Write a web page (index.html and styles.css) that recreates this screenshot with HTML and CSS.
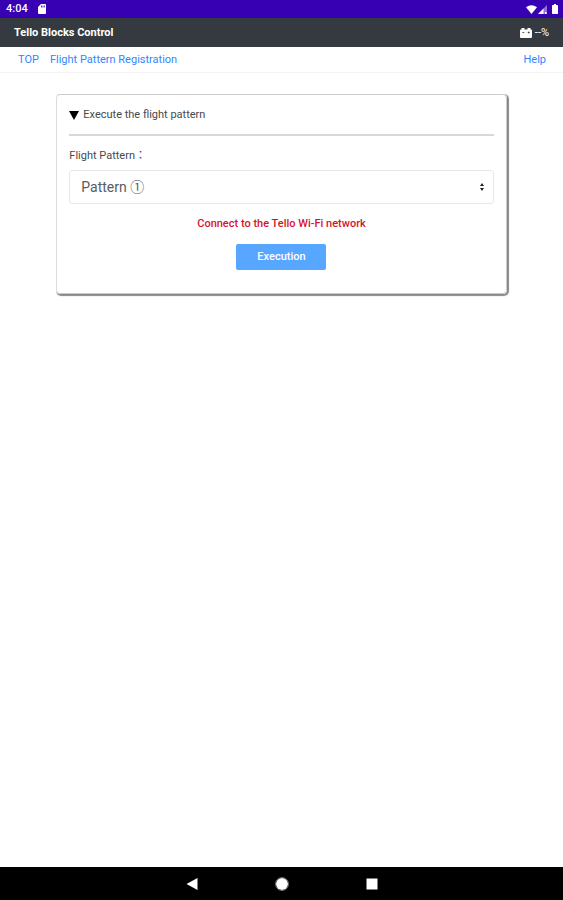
FILE: index.html
```html
<!DOCTYPE html>
<html lang="en">
<head>
<meta charset="utf-8">
<meta name="viewport" content="width=device-width, initial-scale=1">
<title>Tello Blocks Control</title>
<link rel="stylesheet" href="styles.css">
</head>
<body>
<div class="status">
  <div class="status-group">
    <span class="clock">4:04</span>
    <svg width="8" height="10" viewBox="0 0 8 10" fill="currentColor"><path fill-rule="evenodd" d="M3 0h4a1 1 0 0 1 1 1v8a1 1 0 0 1-1 1H1a1 1 0 0 1-1-1V3zM3 1.500v2h.8v-2zM4.600 1.500v2h.8v-2zM6.200 1.500v2h.7v-2z"/></svg>
  </div>
  <div class="status-group status-icons">
    <svg width="11" height="9" viewBox="0 0 11 9" fill="currentColor"><path d="M0 2.300Q5.500-2 11 2.300L5.500 9z"/></svg>
    <svg width="9" height="9" viewBox="0 0 9 9" fill="currentColor"><path opacity=".45" d="M9 0v9H0z"/><path d="M5.500 3.500V9H0zM7 7h1.500v2H7z"/></svg>
    <svg class="charge" width="6" height="10" viewBox="0 0 6 10" fill="currentColor"><path d="M2 0h2v1h1.300q.7 0 .7.700v7.600q0 .7-.7.700H.7Q0 10 0 9.300V1.700Q0 1 .7 1H2z"/></svg>
  </div>
</div>
<header class="header">
  <h1 class="title">Tello Blocks Control</h1>
  <div class="battery">
    <svg width="12" height="10" viewBox="0 0 12 10"><path fill="#fff" d="M1.500 0h3v1.500h3V0h3v1.500h.5q1 0 1 1V9q0 1-1 1H1q-1 0-1-1V2.500q0-1 1-1h.5z"/><path stroke="#343a40" stroke-width=".8" d="M2.300 4.500h2M7.700 4.500h2M8.700 3.500v2"/></svg>
    <span>--%</span>
  </div>
</header>
<nav class="nav">
  <a href="#top">TOP</a>
  <a href="#registration">Flight Pattern Registration</a>
  <a class="help" href="#help">Help</a>
</nav>
<main class="main">
  <form class="card">
    <h2 class="card-title"><svg width="10" height="9" viewBox="0 0 10 9"><path d="M0 0h10L5 9z"/></svg>Execute the flight pattern</h2>
    <label class="label" for="pattern">Flight Pattern：</label>
    <div class="select-wrap">
      <select class="select" id="pattern"><option>Pattern ①</option></select>
      <svg class="arrows" width="4" height="8" viewBox="0 0 4 8"><path fill="#212529" d="M2 0l2 3H0zM2 8L0 5h4z"/></svg>
    </div>
    <p class="warning">Connect to the Tello Wi-Fi network</p>
    <button class="run" type="button">Execution</button>
  </form>
</main>
<footer class="system">
  <button type="button" aria-label="Back"><svg width="12" height="12" viewBox="0 0 12 12" fill="#fff"><path d="M11.500 0v12L.5 6z"/></svg></button>
  <button type="button" aria-label="Home"><svg width="14" height="14" viewBox="0 0 14 14" fill="#fff"><circle cx="7" cy="7" r="6" /><circle cx="7" cy="7" r="6.500" fill="none" stroke="#888" stroke-width=".8"/></svg></button>
  <button type="button" aria-label="Recents"><svg width="12" height="12" viewBox="0 0 12 12" fill="#fff"><path d="M.5.500h11v11H.5z"/></svg></button>
</footer>
</body>
</html>
```
FILE: styles.css
```css
* { box-sizing: border-box; }

body {
  margin: 0;
  min-height: 100vh;
  display: flex;
  flex-direction: column;
  background: #fff;
  color: #454a4f;
  font: 11px/16px Roboto, "Noto Sans CJK JP", sans-serif;
}

svg { display: block; flex: none; }

.status {
  height: 18px;
  padding: 0 5px 0 6px;
  display: flex;
  align-items: center;
  justify-content: space-between;
  background: #3700b3;
  color: #fff;
}
.status-group { display: flex; align-items: center; gap: 10px; }
.status-icons { gap: 1px; }
.charge { margin-left: 4px; }
.clock { font-weight: 500; }

.header {
  height: 29px;
  padding: 0 14px;
  display: flex;
  align-items: center;
  justify-content: space-between;
  background: #343a40;
  color: #fff;
}
.title { margin: 0; font-size: 11px; font-weight: 700; }
.battery { display: flex; align-items: center; gap: 3px; }

.nav {
  height: 26px;
  padding: 1px 17px 0 18px;
  display: flex;
  align-items: center;
  gap: 11px;
  border-bottom: 1px solid #f3f3f3;
}
.nav a { color: #3385ff; text-decoration: none; }
.nav .help { margin-left: auto; }

.main { flex: 1; padding-top: 21px; }

.card {
  width: 80%;
  margin: 0 auto;
  padding: 12px 12px 23px;
  border: 1px solid #ccc;
  border-radius: 4px;
  box-shadow: 1px 1px 1px 1px #888;
  clip-path: inset(0 -3px -3px 0);
}
.card-title {
  margin: 0 0 12px;
  padding-bottom: 11px;
  display: flex;
  align-items: center;
  gap: 4px;
  border-bottom: 2px solid #d8d8d8;
  font-size: 11px;
  font-weight: 400;
}
.label { display: block; margin-bottom: 6px; }

.select-wrap { position: relative; }
.select {
  display: block;
  width: 100%;
  height: 34px;
  padding: 0 24px 0 11px;
  appearance: none;
  border: 1px solid #e6e8ea;
  border-radius: 3px;
  background: #fff;
  color: #565d64;
  font: inherit;
  font-size: 14px;
}
.arrows {
  position: absolute;
  top: 13px;
  right: 10px;
  pointer-events: none;
}
.warning {
  margin: 12px 0;
  color: #d5142c;
  font-weight: 500;
  text-align: center;
}
.run {
  display: block;
  width: 90px;
  height: 26px;
  margin: 0 auto;
  padding: 0;
  border: 0;
  border-radius: 2px;
  background: #57a6ff;
  color: #fff;
  font: inherit;
  font-weight: 500;
}

.system {
  height: 33px;
  display: flex;
  align-items: center;
  justify-content: center;
  background: #000;
}
.system button {
  width: 90px;
  height: 32px;
  padding: 0;
  display: flex;
  align-items: center;
  justify-content: center;
  border: 0;
  background: none;
}
```
